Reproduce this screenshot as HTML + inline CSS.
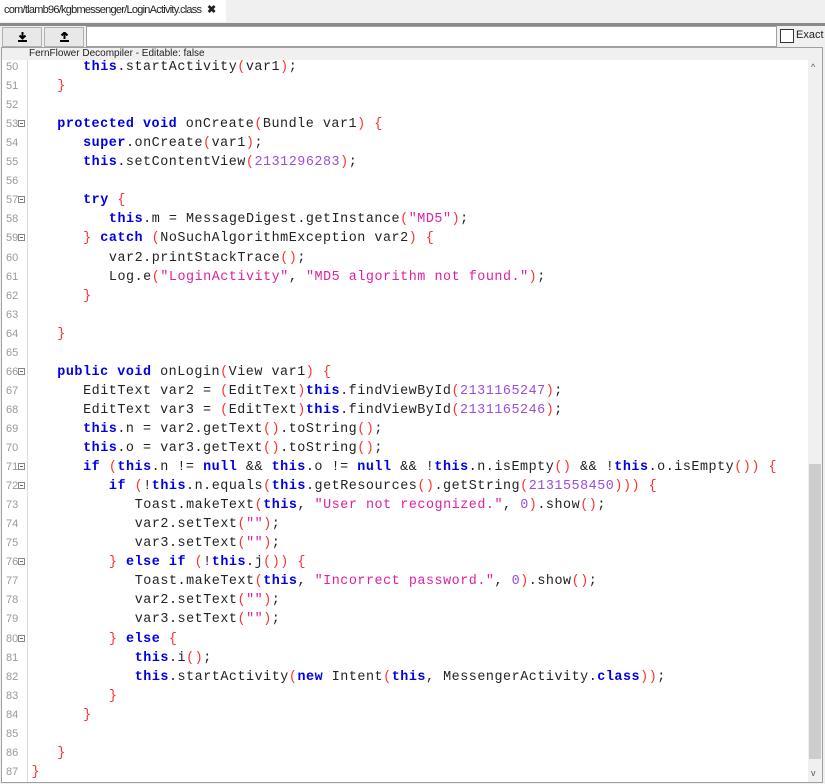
<!DOCTYPE html>
<html><head><meta charset="utf-8"><style>
body{margin:0;width:825px;height:784px;background:#f0f0f0;overflow:hidden;position:relative;font-family:"Liberation Sans",sans-serif}
.tab{position:absolute;left:0;top:0;width:222px;height:22px;background:#fff;font-size:11px;line-height:21px;padding-left:4px;color:#222;letter-spacing:-0.75px;white-space:nowrap}
.tab b{position:absolute;left:207px;top:0;font-size:11px;letter-spacing:0}
.topline{position:absolute;left:0;top:23px;width:825px;height:3px;background:#8a8a8a}
.btn{position:absolute;top:27px;height:18px;width:38px;background:#e8e8e8;border:1px solid #b0b0b0}
.btn svg{position:absolute;left:15px;top:4px}
.field{position:absolute;left:86px;top:26px;width:689px;height:19px;background:#fff;border:1px solid #a0a0a0}
.cb{position:absolute;left:780px;top:29px;width:12px;height:12px;border:1px solid #333;background:#fff}
.ex{position:absolute;left:796px;top:29px;font-size:11px;color:#222}
.ed{position:absolute;left:1px;top:47px;width:820px;height:734px;border:1px solid #a0a0a0;background:#fff}
.hdr{position:absolute;left:0;top:0;width:820px;height:12px;background:#f0f0f0;font-size:10px;line-height:12px;padding-left:27px;color:#222;box-sizing:border-box}
.gut{position:absolute;left:25px;top:12px;width:1px;height:722px;background:#ddd}
.sb{position:absolute;left:806px;top:12px;width:14px;height:722px;background:#f0f0f0}
.thumb{position:absolute;left:1px;top:404px;width:12px;height:295px;background:#cdcdcd}
.sb i{position:absolute;left:3px;font-style:normal;font-size:9px;color:#555}
.l{position:absolute;left:0;height:19px;width:800px;font-family:"Liberation Mono",monospace;font-size:13.4px;line-height:19px;white-space:pre;color:#222;letter-spacing:0.53px}
.n{position:absolute;left:4px;color:#999;font-size:11px;font-family:"Liberation Sans",sans-serif;letter-spacing:0}
.f{position:absolute;left:16px;top:5px;width:7px;height:7px;border:1px solid #888;box-sizing:border-box;background:#fff}
.f:after{content:"";position:absolute;left:1px;top:2px;width:3px;height:1px;background:#666}
.c{position:absolute}
.k{color:#0000e6;font-weight:bold}
.p{color:#ff3030}
.d{color:#9b4ddc}
.s{color:#e0209f}
</style></head><body>
<div class="tab">com/tlamb96/kgbmessenger/LoginActivity.class<b>✖</b></div>
<div class="topline"></div>
<div class="btn" style="left:2px"><svg width="9" height="10" viewBox="0 0 9 10"><path d="M4.5 0V6M1.5 3.5L4.5 6.5L7.5 3.5" stroke="#000" stroke-width="2" fill="none"/><rect x="0" y="8" width="9" height="2" fill="#000"/></svg></div>
<div class="btn" style="left:44px"><svg width="9" height="10" viewBox="0 0 9 10"><path d="M4.5 7V1M1.5 3.5L4.5 0.5L7.5 3.5" stroke="#000" stroke-width="2" fill="none"/><rect x="0" y="8" width="9" height="2" fill="#000"/></svg></div>
<div class="field"></div>
<div class="cb"></div><div class="ex">Exact</div>
<div class="ed">
<div class="hdr">FernFlower Decompiler - Editable: false</div>
<div class="gut"></div>
<div class="sb"><i style="top:2px">^</i><div class="thumb"></div><i style="top:708px">v</i></div>
<div id="code"></div>
</div>
<script>
var L=[
[50,2,'<span class="k">this</span>.startActivity<span class="p">(</span>var1<span class="p">)</span>;'],
[51,1,'<span class="p">}</span>'],
[52,0,''],
[53,1,'<span class="k">protected void</span> onCreate<span class="p">(</span>Bundle var1<span class="p">) {</span>',1],
[54,2,'<span class="k">super</span>.onCreate<span class="p">(</span>var1<span class="p">)</span>;'],
[55,2,'<span class="k">this</span>.setContentView<span class="p">(</span><span class="d">2131296283</span><span class="p">)</span>;'],
[56,0,''],
[57,2,'<span class="k">try</span> <span class="p">{</span>',1],
[58,3,'<span class="k">this</span>.m = MessageDigest.getInstance<span class="p">(</span><span class="s">"MD5"</span><span class="p">)</span>;'],
[59,2,'<span class="p">}</span> <span class="k">catch</span> <span class="p">(</span>NoSuchAlgorithmException var2<span class="p">) {</span>',1],
[60,3,'var2.printStackTrace<span class="p">()</span>;'],
[61,3,'Log.e<span class="p">(</span><span class="s">"LoginActivity"</span>, <span class="s">"MD5 algorithm not found."</span><span class="p">)</span>;'],
[62,2,'<span class="p">}</span>'],
[63,0,''],
[64,1,'<span class="p">}</span>'],
[65,0,''],
[66,1,'<span class="k">public void</span> onLogin<span class="p">(</span>View var1<span class="p">) {</span>',1],
[67,2,'EditText var2 = <span class="p">(</span>EditText<span class="p">)</span><span class="k">this</span>.findViewById<span class="p">(</span><span class="d">2131165247</span><span class="p">)</span>;'],
[68,2,'EditText var3 = <span class="p">(</span>EditText<span class="p">)</span><span class="k">this</span>.findViewById<span class="p">(</span><span class="d">2131165246</span><span class="p">)</span>;'],
[69,2,'<span class="k">this</span>.n = var2.getText<span class="p">()</span>.toString<span class="p">()</span>;'],
[70,2,'<span class="k">this</span>.o = var3.getText<span class="p">()</span>.toString<span class="p">()</span>;'],
[71,2,'<span class="k">if</span> <span class="p">(</span><span class="k">this</span>.n != <span class="k">null</span> &amp;&amp; <span class="k">this</span>.o != <span class="k">null</span> &amp;&amp; !<span class="k">this</span>.n.isEmpty<span class="p">()</span> &amp;&amp; !<span class="k">this</span>.o.isEmpty<span class="p">()) {</span>',1],
[72,3,'<span class="k">if</span> <span class="p">(</span>!<span class="k">this</span>.n.equals<span class="p">(</span><span class="k">this</span>.getResources<span class="p">()</span>.getString<span class="p">(</span><span class="d">2131558450</span><span class="p">))) {</span>',1],
[73,4,'Toast.makeText<span class="p">(</span><span class="k">this</span>, <span class="s">"User not recognized."</span>, <span class="d">0</span><span class="p">)</span>.show<span class="p">()</span>;'],
[74,4,'var2.setText<span class="p">(</span><span class="s">""</span><span class="p">)</span>;'],
[75,4,'var3.setText<span class="p">(</span><span class="s">""</span><span class="p">)</span>;'],
[76,3,'<span class="p">}</span> <span class="k">else if</span> <span class="p">(</span>!<span class="k">this</span>.j<span class="p">()) {</span>',1],
[77,4,'Toast.makeText<span class="p">(</span><span class="k">this</span>, <span class="s">"Incorrect password."</span>, <span class="d">0</span><span class="p">)</span>.show<span class="p">()</span>;'],
[78,4,'var2.setText<span class="p">(</span><span class="s">""</span><span class="p">)</span>;'],
[79,4,'var3.setText<span class="p">(</span><span class="s">""</span><span class="p">)</span>;'],
[80,3,'<span class="p">}</span> <span class="k">else</span> <span class="p">{</span>',1],
[81,4,'<span class="k">this</span>.i<span class="p">()</span>;'],
[82,4,'<span class="k">this</span>.startActivity<span class="p">(</span><span class="k">new</span> Intent<span class="p">(</span><span class="k">this</span>, MessengerActivity.<span class="k">class</span><span class="p">))</span>;'],
[83,3,'<span class="p">}</span>'],
[84,2,'<span class="p">}</span>'],
[85,0,''],
[86,1,'<span class="p">}</span>'],
[87,0,'<span class="p">}</span>']
];
var h='';
L.forEach(function(r,i){
 var top=10+i*19.05;
 h+='<div class="l" style="top:'+top+'px"><span class="n">'+r[0]+'</span>'+(r[3]?'<span class="f"></span>':'')+'<span class="c" style="left:'+(29.5+25.8*r[1])+'px">'+r[2]+'</span></div>';
});
document.getElementById('code').innerHTML=h;
</script>
</body></html>
